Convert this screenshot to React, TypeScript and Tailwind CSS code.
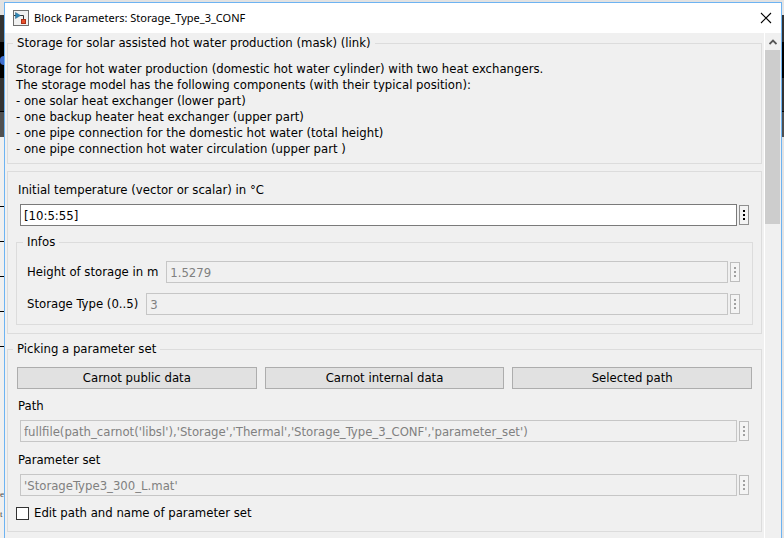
import { useId } from "react";
import type { ReactNode } from "react";

function MoreButton({ disabled = false, label }: { disabled?: boolean; label: string }) {
  return (
    <button
      type="button"
      disabled={disabled}
      aria-label={label}
      className="flex h-5 w-[10px] shrink-0 flex-col items-center justify-center gap-[2px] border border-[#8f8f8f] bg-[#f4f4f4] text-black disabled:border-[#bdbdbd] disabled:text-[#a0a0a0]"
    >
      <span className="size-[2px] bg-current" />
      <span className="size-[2px] bg-current" />
      <span className="size-[2px] bg-current" />
    </button>
  );
}

const inputClass =
  "h-[22px] min-w-0 flex-1 border border-[#7a7a7a] bg-white px-[3px] text-black outline-none disabled:border-[#c6c6c6] disabled:bg-[#f0f0f0] disabled:text-[#808080]";

function StackedField({ label, value, disabled = false }: { label: string; value: string; disabled?: boolean }) {
  const id = useId();
  return (
    <div className="flex flex-col gap-[6px]">
      <label htmlFor={id} className="ml-[2px]">{label}</label>
      <div className="flex items-center gap-[2px] px-1">
        <input id={id} type="text" defaultValue={value} disabled={disabled} className={inputClass} />
        <MoreButton disabled={disabled} label={`${label} options`} />
      </div>
    </div>
  );
}

function InlineField({ label, value }: { label: string; value: string }) {
  const id = useId();
  return (
    <div className="flex items-center gap-[2px]">
      <label htmlFor={id} className="mr-[6px]">{label}</label>
      <input id={id} type="text" defaultValue={value} disabled className={inputClass} />
      <MoreButton disabled label={`${label} options`} />
    </div>
  );
}

function PushButton({ children }: { children: ReactNode }) {
  return (
    <button type="button" className="h-[22px] border border-[#adadad] bg-[#e1e1e1] text-black">
      {children}
    </button>
  );
}

function BlockIcon() {
  return (
    <svg viewBox="0 0 16 16" className="size-4" aria-hidden="true">
      <rect x="0.5" y="0.5" width="15" height="15" fill="#f1f1f1" stroke="#6f6f6f" />
      <path d="M1 5.500h2M7 5.500h3.500V9" fill="none" stroke="#333" />
      <path d="M2.500 2.500v6l5-3z" fill="#2f86b5" stroke="#1d5f86" strokeWidth="0.500" />
      <rect x="8.500" y="9.500" width="4" height="4" fill="#e8502c" stroke="#a93018" />
    </svg>
  );
}

const description = [
  "Storage for hot water production (domestic hot water cylinder) with two heat exchangers.",
  "The storage model has the following components (with their typical position):",
  "- one solar heat exchanger (lower part)",
  "- one backup heater heat exchanger (upper part)",
  "- one pipe connection for the domestic hot water (total height)",
  "- one pipe connection hot water circulation (upper part )",
];

export default function App() {
  return (
    <div className="flex h-screen overflow-hidden bg-[#e2e2e2] font-['DejaVu_Sans_Condensed','Noto_Sans',sans-serif] text-[13px] leading-4 text-black">
      <div className="flex w-1 shrink-0 flex-col overflow-hidden bg-[#f0f0f0]" aria-hidden="true">
        <div className="h-[15px] shrink-0 bg-[#e2e2e2]" />
        <div className="h-[27px] shrink-0 bg-[#333]" />
        <div className="flex h-9 shrink-0 items-center bg-black">
          <div className="h-[9px] w-1 rounded-l-full bg-[#3f6fd0]" />
        </div>
        <div className="h-[33px] shrink-0 bg-[#333]" />
        <div className="h-px shrink-0 bg-black" />
        <div className="h-[25px] shrink-0 bg-[#505050]" />
        <div className="flex shrink-0 flex-col gap-[34px] pt-[69px]">
          <div className="h-px bg-black" />
          <div className="h-px bg-black" />
          <div className="h-px bg-black" />
          <div className="h-px bg-black" />
          <div className="h-px bg-black" />
        </div>
        <div className="flex flex-col gap-1 pt-[139px] font-['Liberation_Serif',serif] text-[9px] text-[#444]">
          <span>e</span>
          <span>t</span>
        </div>
      </div>

      <main className="mt-[2px] flex min-w-0 flex-1 flex-col border border-b-0 border-[#6db3f2] bg-[#f0f0f0]">
        <header className="flex h-[30px] shrink-0 items-center gap-[5px] bg-white pr-[9px] pl-2">
          <BlockIcon />
          <h1 className="flex-1 font-['Noto_Sans','Open_Sans',sans-serif] text-[11px]">
            Block Parameters: Storage_Type_3_CONF
          </h1>
          <button type="button" aria-label="Close" className="flex size-3 items-center justify-center">
            <svg viewBox="0 0 12 12" className="size-3" aria-hidden="true">
              <path d="M1 1l10 10M11 1L1 11" stroke="#000" strokeWidth="1.100" />
            </svg>
          </button>
        </header>

        <div className="flex min-h-0 flex-1">
          <form className="flex min-w-0 flex-1 flex-col gap-[7px] px-[2px] pt-[2px]">
            <fieldset className="min-w-0 border border-[#dcdcdc] px-2 pt-[10px] pb-[6px]">
              <legend className="-ml-[3px] px-1">Storage for solar assisted hot water production (mask) (link)</legend>
              {description.map((line) => (
                <p key={line}>{line}</p>
              ))}
            </fieldset>

            <div className="flex flex-col gap-2 border border-[#dcdcdc] px-2 pt-[10px] pb-2">
              <StackedField label="Initial temperature (vector or scalar) in °C" value="[10:5:55]" />
              <fieldset className="min-w-0 border border-[#dcdcdc] pt-[11px] pr-3 pb-[9px] pl-[10px]">
                <legend className="-ml-1 px-1">Infos</legend>
                <div className="flex flex-col gap-[10px]">
                  <InlineField label="Height of storage in m" value="1.5279" />
                  <InlineField label="Storage Type (0..5)" value="3" />
                </div>
              </fieldset>
            </div>

            <fieldset className="min-w-0 border border-[#dcdcdc] px-2 pt-[10px] pb-[10px]">
              <legend className="-ml-[3px] px-1">Picking a parameter set</legend>
              <div className="flex flex-col gap-[9px]">
                <div className="grid grid-cols-3 gap-2 px-px">
                  <PushButton>Carnot public data</PushButton>
                  <PushButton>Carnot internal data</PushButton>
                  <PushButton>Selected path</PushButton>
                </div>
                <div className="flex flex-col gap-[10px]">
                  <StackedField
                    disabled
                    label="Path"
                    value="fullfile(path_carnot('libsl'),'Storage','Thermal','Storage_Type_3_CONF','parameter_set')"
                  />
                  <StackedField disabled label="Parameter set" value="'StorageType3_300_L.mat'" />
                </div>
                <label className="flex items-center gap-[5px]">
                  <input type="checkbox" className="size-[13px] appearance-none border border-[#333] bg-white" />
                  Edit path and name of parameter set
                </label>
              </div>
            </fieldset>
          </form>

          <div className="mr-px flex w-4 shrink-0 flex-col border-l border-white bg-[#f0f0f0]">
            <button type="button" aria-label="Scroll up" className="flex h-[17px] shrink-0 items-center justify-center">
              <svg viewBox="0 0 8 6" className="h-[6px] w-2" aria-hidden="true">
                <path d="M0.500 5L4 1.500L7.500 5" fill="none" stroke="#555" strokeWidth="1.800" />
              </svg>
            </button>
            <div className="h-[174px] shrink-0 bg-[#cdcdcd]" />
          </div>
        </div>
      </main>

      <div className="flex w-[2px] shrink-0 flex-col overflow-hidden bg-[#e4e4e4]" aria-hidden="true">
        <div className="h-[15px] shrink-0" />
        <div className="h-[27px] shrink-0 bg-[#333]" />
        <div className="h-9 shrink-0 bg-black" />
        <div className="h-[33px] shrink-0 bg-[#333]" />
        <div className="h-px shrink-0 bg-black" />
        <div className="h-[25px] shrink-0 bg-[#505050]" />
      </div>
    </div>
  );
}
